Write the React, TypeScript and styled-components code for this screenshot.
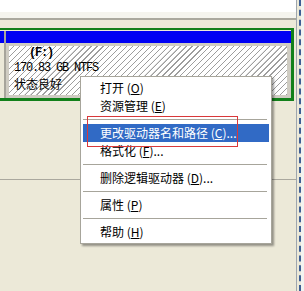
import styled, { createGlobalStyle } from "styled-components";

const GlobalStyle = createGlobalStyle`
  html, body {
    margin: 0;
    padding: 0;
  }
  body {
    width: 304px;
    height: 291px;
    overflow: hidden;
    background: #ece9d8;
    font-family: "Noto Sans CJK SC", sans-serif;
  }
`;

const Screen = styled.div`
  position: relative;
  display: flex;
  width: 304px;
  height: 291px;
`;

const Main = styled.div`
  display: flex;
  flex-direction: column;
  width: 296px;
`;

const ListPane = styled.div`
  height: 12px;
  background: #ffffff;
`;

const Splitter = styled.div`
  height: 6px;
  background: #f5f4ee;
  border-bottom: 2px solid #aaa89e;
`;

const DiskArea = styled.div`
  flex: 1;
  display: flex;
  flex-direction: column;
  padding-top: 8px;
`;

const ExtPartition = styled.div`
  display: flex;
  width: 291px;
  height: 67px;
  padding-top: 1px;
  border-top: 2px solid #12801a;
  border-right: 3px solid #12801a;
  border-bottom: 3px solid #12801a;
`;

const Volume = styled.div<{ $grow?: boolean }>`
  display: flex;
  flex-direction: column;
  width: ${(p) => (p.$grow ? "auto" : "4px")};
  flex: ${(p) => (p.$grow ? 1 : "none")};
`;

const VolumeHeader = styled.div`
  height: 12px;
  background: #0000f4;
`;

const VolumeGap = styled.div`
  width: 2px;
  background: #a7a59b;
`;

const TailBody = styled.div`
  flex: 1;
  background: #ece9d8;
`;

const HatchBody = styled.div`
  flex: 1;
  border: 3px solid #cfccc2;
  border-right-width: 4px;
  padding: 0 0 0 5px;
  background: repeating-linear-gradient(
    135deg,
    #ffffff 0px,
    #ffffff 3.2px,
    #9d9d9d 3.4px,
    #9d9d9d 4.2px
  );
  font-size: 12px;
  line-height: 15px;
  color: #000;
`;

const MonoLine = styled.div<{ $bold?: boolean }>`
  padding-left: ${(p) => (p.$bold ? "15px" : "0")};
  font-family: "Liberation Mono", monospace;
  font-weight: ${(p) => (p.$bold ? "bold" : "normal")};
  font-size: 12px;
  letter-spacing: -1.2px;
`;

const DriveStatus = styled.div`
  font-family: "Noto Sans CJK SC", sans-serif;
  font-size: 12px;
`;

const LowerArea = styled.div`
  flex: 1;
`;

const DiskDivider = styled.div`
  margin-top: 78px;
  border-top: 1px solid #aaa89e;
`;

const Strip = styled.div`
  display: flex;
  width: 8px;
  background: #ece9d8;
`;

const StripEdge = styled.div`
  width: 1px;
  background: #9ea6ae;
`;

const StripDash = styled.div`
  margin-left: 2px;
  width: 0;
  border-left: 2px dashed #3d5f95;
`;

const StripRest = styled.div`
  flex: 1;
  background: #f3f3f0;
`;

const Menu = styled.div`
  position: absolute;
  left: 80px;
  top: 76px;
  width: 186px;
  padding: 2px;
  background: #ffffff;
  border: 1px solid #a7a59b;
  box-shadow: 2px 2px 2px rgba(0, 0, 0, 0.38);
`;

const MenuItem = styled.div<{ $active?: boolean }>`
  height: 18px;
  padding-left: 17px;
  font-size: 12px;
  line-height: 18px;
  white-space: nowrap;
  color: ${(p) => (p.$active ? "#ffffff" : "#000000")};
  background: ${(p) => (p.$active ? "#316ac5" : "transparent")};
`;

const MenuSeparator = styled.div`
  height: 9px;
  display: flex;
  align-items: center;
  padding-right: 2px;

  &::after {
    content: "";
    flex: 1;
    border-top: 1px solid #a7a59b;
  }
`;

const Highlight = styled.div`
  position: absolute;
  left: 87px;
  top: 116px;
  width: 149px;
  height: 29px;
  border: 1px solid #d9383a;
  pointer-events: none;
`;

const items: (
  | { label: string; key: string; tail?: string; active?: boolean }
  | null
)[] = [
  { label: "打开", key: "O" },
  { label: "资源管理", key: "E" },
  null,
  { label: "更改驱动器名和路径", key: "C", tail: "...", active: true },
  { label: "格式化", key: "F", tail: "..." },
  null,
  { label: "删除逻辑驱动器", key: "D", tail: "..." },
  null,
  { label: "属性", key: "P" },
  null,
  { label: "帮助", key: "H" },
];

export default function App() {
  return (
    <>
      <GlobalStyle />
      <Screen>
        <Main>
          <ListPane />
          <Splitter />
          <DiskArea>
            <ExtPartition>
              <Volume>
                <VolumeHeader />
                <TailBody />
              </Volume>
              <VolumeGap />
              <Volume $grow>
                <VolumeHeader />
                <HatchBody>
                  <MonoLine $bold>(F:)</MonoLine>
                  <MonoLine>170.83 GB NTFS</MonoLine>
                  <DriveStatus>状态良好</DriveStatus>
                </HatchBody>
              </Volume>
            </ExtPartition>
            <LowerArea>
              <DiskDivider />
            </LowerArea>
          </DiskArea>
        </Main>
        <Strip>
          <StripEdge />
          <StripDash />
          <StripRest />
        </Strip>
        <Menu>
          {items.map((it, i) =>
            it ? (
              <MenuItem key={i} $active={it.active}>
                {it.label} (<u>{it.key}</u>){it.tail ?? ""}
              </MenuItem>
            ) : (
              <MenuSeparator key={i} />
            )
          )}
        </Menu>
        <Highlight />
      </Screen>
    </>
  );
}
